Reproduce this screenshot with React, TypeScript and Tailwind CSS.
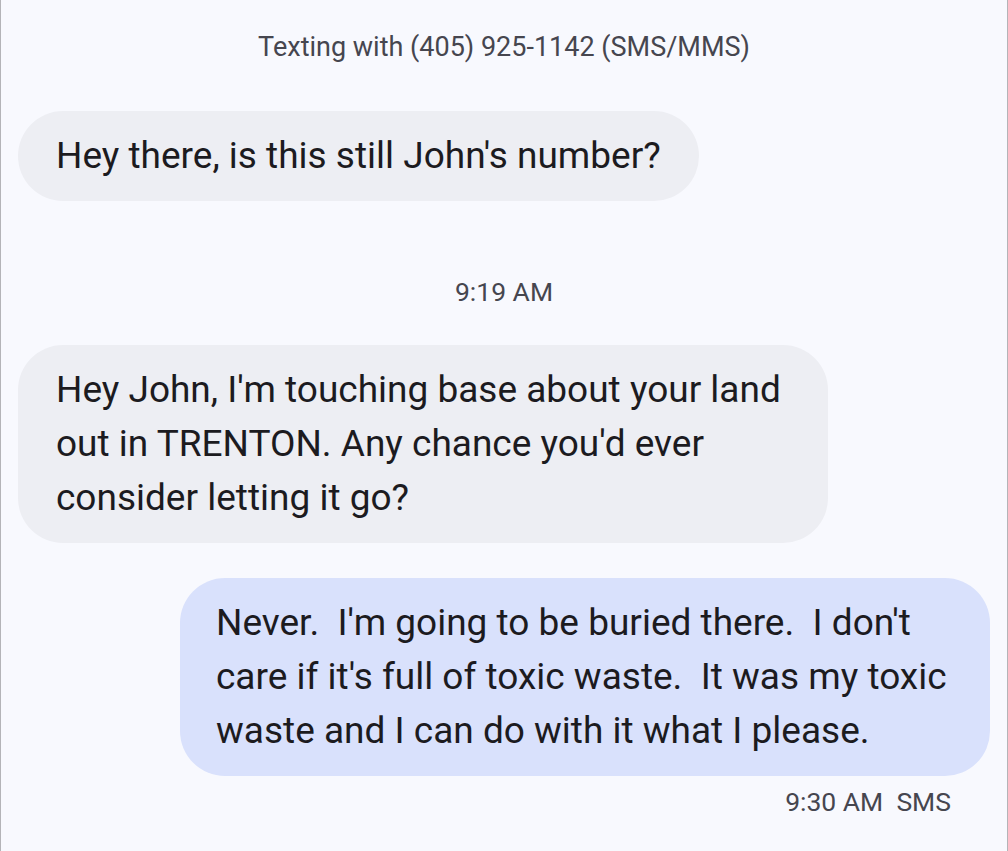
export default function App() {
  return (
    <div className="min-h-[851px] w-[1008px] bg-[#f8f9fe] border-x border-[#b4b4b8] font-['Roboto',sans-serif] text-[#1c1b1f]">
      {/* header */}
      <div className="pt-[32px] text-center text-[27px] leading-[30px] text-[#46464f]">
        Texting with (405) 925-1142 (SMS/MMS)
      </div>

      <div className="flex flex-col px-[17px] pt-[49px]">
        {/* incoming */}
        <div className="self-start rounded-[45px] bg-[#edeef3] px-[38px] py-[18px] text-[37px] leading-[54px]">
          Hey there, is this still John's number?
        </div>

        <div className="pt-[76px] pb-[38px] text-center text-[26.5px] leading-[30px] text-[#46464f]">
          9:19 AM
        </div>

        <div className="self-start w-[810px] rounded-[45px] bg-[#edeef3] px-[38px] py-[18px] text-[37px] leading-[54px] whitespace-pre-wrap">
          {"Hey John, I'm touching base about your land\nout in TRENTON. Any chance you'd ever\nconsider letting it go?"}
        </div>

        {/* outgoing */}
        <div className="mt-[35px] self-end w-[810px] rounded-[45px] bg-[#d9e1fc] px-[36px] py-[18px] text-[37px] leading-[54px] whitespace-pre-wrap">
          {"Never.  I'm going to be buried there.  I don't\ncare if it's full of toxic waste.  It was my toxic\nwaste and I can do with it what I please."}
        </div>

        <div className="pt-[11px] pr-[39px] text-right text-[26.5px] leading-[30px] text-[#46464f]">
          9:30 AM&nbsp;&nbsp;SMS
        </div>
      </div>
    </div>
  )
}
